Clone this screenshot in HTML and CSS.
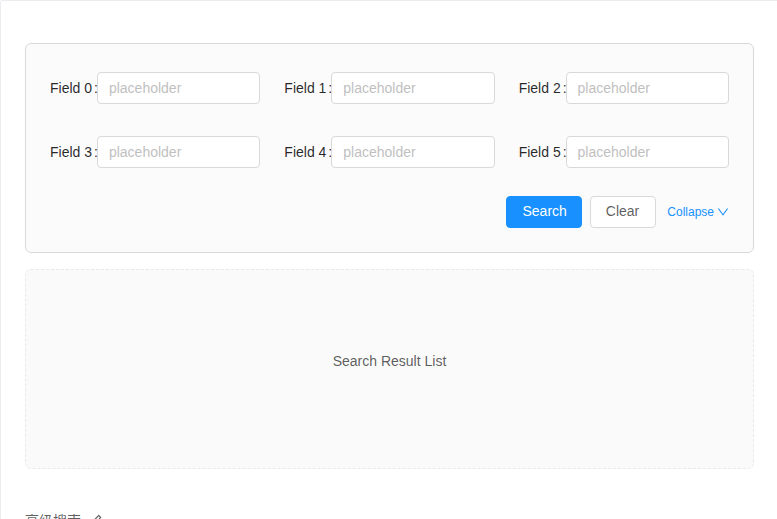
FILE: index.html
```html
<!DOCTYPE html>
<html lang="zh-CN">
<head>
  <meta charset="UTF-8" />
  <meta name="viewport" content="width=device-width, initial-scale=1.0" />
  <title>Advanced Search</title>
  <link rel="stylesheet" href="styles.css">
</head>
<body>
  <section class="code-box">
    <div class="code-box-demo">
      <form class="search-form">
        <div class="form-row">
          <div class="form-item"><label>Field 0<span class="colon">:</span></label><input type="text" placeholder="placeholder"></div>
          <div class="form-item"><label>Field 1<span class="colon">:</span></label><input type="text" placeholder="placeholder"></div>
          <div class="form-item"><label>Field 2<span class="colon">:</span></label><input type="text" placeholder="placeholder"></div>
          <div class="form-item"><label>Field 3<span class="colon">:</span></label><input type="text" placeholder="placeholder"></div>
          <div class="form-item"><label>Field 4<span class="colon">:</span></label><input type="text" placeholder="placeholder"></div>
          <div class="form-item"><label>Field 5<span class="colon">:</span></label><input type="text" placeholder="placeholder"></div>
        </div>
        <div class="form-actions">
          <button type="submit" class="btn btn-primary">Search</button>
          <button type="button" class="btn">Clear</button>
          <a class="toggle" href="#">Collapse <svg class="icon" viewBox="64 64 896 896" width="1em" height="1em" fill="currentColor"><path d="M884 256h-75c-5.1 0-9.9 2.5-12.9 6.6L512 654.2 227.9 262.6c-3-4.1-7.8-6.6-12.9-6.6h-75c-6.5 0-10.3 7.4-6.5 12.7l352.6 486.1c12.8 17.6 39 17.6 51.7 0l352.6-486.1c3.9-5.3.1-12.7-6.4-12.7z"/></svg></a>
        </div>
      </form>
      <div class="search-result-list">Search Result List</div>
    </div>
    <div class="code-box-meta">
      <div class="code-box-title">
        <a href="#">高级搜索</a>
        <a class="edit-button" href="#"><svg viewBox="64 64 896 896" width="1em" height="1em" fill="currentColor"><path d="M257.7 752c2 0 4-.2 6-.5L431.9 722c2-.4 3.9-1.3 5.3-2.8l423.9-423.9a9.960 9.960 0 000-14.1L694.9 114.9c-1.9-1.900-4.4-2.9-7.1-2.9s-5.2 1-7.1 2.9L256.8 538.8c-1.5 1.5-2.4 3.3-2.8 5.3l-29.5 168.2a33.5 33.5 0 009.4 29.8c6.6 6.4 14.9 9.9 23.8 9.9zm67.4-174.4L687.8 215l73.3 73.3-362.7 362.6-88.9 15.7 15.6-89zM880 836H144c-17.7 0-32 14.3-32 32v36c0 4.4 3.6 8 8 8h784c4.4 0 8-3.6 8-8v-36c0-17.7-14.3-32-32-32z"/></svg></a>
      </div>
      <p class="code-box-desc">三列布局，展开后显示更多搜索条件。</p>
    </div>
  </section>
</body>
</html>
```

FILE: styles.css
```css
html, body {
  margin: 0;
  padding: 0;
  background: #fff;
  overflow: hidden;
}
*, *::before, *::after {
  box-sizing: border-box;
}
body {
  font-family: "Liberation Sans", "Noto Sans CJK SC", sans-serif;
  font-size: 14px;
  line-height: 1.5715;
  color: rgba(0, 0, 0, 0.85);
}
.code-box {
  position: relative;
  width: 779px;
  border: 1px solid #ebedf0;
  border-radius: 2px;
}
.code-box-demo {
  padding: 42px 24px 50px;
}
.search-form {
  background: #fbfbfb;
  border: 1px solid #d9d9d9;
  border-radius: 6px;
  padding: 28px 24px 24px;
  margin: 0;
}
.form-row {
  display: grid;
  grid-template-columns: repeat(3, minmax(0, 1fr));
  column-gap: 24px;
  row-gap: 32px;
}
.form-item {
  display: flex;
  align-items: center;
  height: 32px;
}
.form-item label {
  flex: none;
  white-space: nowrap;
  color: rgba(0, 0, 0, 0.85);
}
.colon {
  margin: 0 -1px 0 2px;
}
.form-item input {
  flex: 1;
  min-width: 0;
  width: 0;
  height: 32px;
  padding: 4px 11px;
  font: inherit;
  color: rgba(0, 0, 0, 0.85);
  background: #fff;
  border: 1px solid #d9d9d9;
  border-radius: 4px;
  outline: none;
}
.form-item input::placeholder {
  color: #bfbfbf;
}
.form-actions {
  display: flex;
  justify-content: flex-end;
  align-items: center;
  margin-top: 28px;
}
.btn {
  height: 32px;
  padding: 3px 15px 5px;
  font: inherit;
  color: rgba(0, 0, 0, 0.65);
  background: #fff;
  border: 1px solid #d9d9d9;
  border-radius: 4px;
  cursor: pointer;
}
.btn + .btn {
  margin: 0 8px;
  padding: 3px 16px 5px 15px;
}
.btn-primary {
  padding: 3px 14px 5px 15px;
  color: #fff;
  background: #1890ff;
  border-color: #1890ff;
}
.toggle {
  display: inline-flex;
  align-items: center;
  gap: 3px;
  margin-left: 3px;
  font-size: 12px;
  color: #1890ff;
  text-decoration: none;
}
.toggle .icon {
  width: 12px;
  height: 12px;
}
.search-result-list {
  margin-top: 16px;
  min-height: 200px;
  padding-top: 80px;
  text-align: center;
  color: rgba(0, 0, 0, 0.65);
  background: #fafafa;
  border: 1px dashed #e9e9e9;
  border-radius: 6px;
}
.code-box-meta {
  position: relative;
  padding: 18px 24px 12px;
  border-top: 1px dashed #ebedf0;
}
.code-box-title {
  position: absolute;
  top: -11px;
  padding: 1px 8px 1px 0;
  background: #fff;
  display: flex;
  align-items: center;
  gap: 8px;
}
.code-box-title a {
  color: rgba(0, 0, 0, 0.65);
  text-decoration: none;
}
.edit-button {
  display: inline-flex;
}
.code-box-desc {
  margin: 0;
  color: rgba(0, 0, 0, 0.65);
}
```
